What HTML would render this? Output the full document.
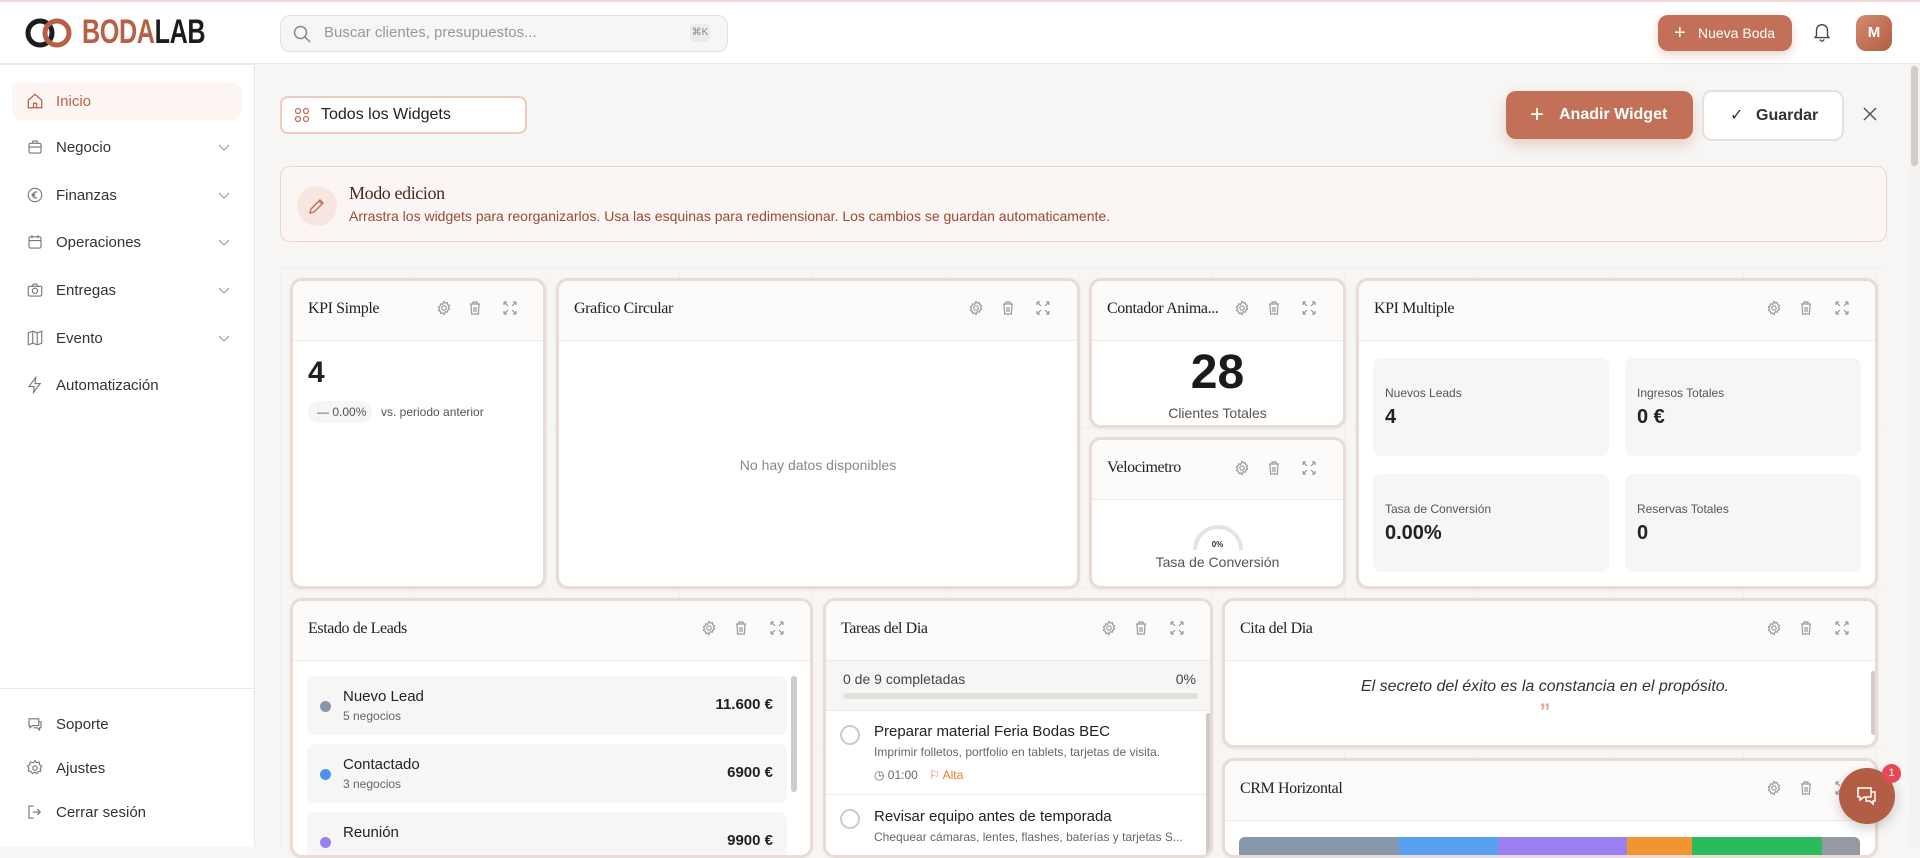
<!DOCTYPE html>
<html><head><meta charset="utf-8"><style>
*{box-sizing:border-box;margin:0;padding:0}
body{width:1920px;height:847px;overflow:hidden;font-family:"Liberation Sans",sans-serif;background:#f7f6f4;position:relative;color:#222}
.abs{position:absolute}
.serif{font-family:"Liberation Serif",serif;letter-spacing:-0.4px}
#top{left:0;top:0;width:1920px;height:2px;background:#f3d9dc}
#hdr{left:0;top:2px;width:1920px;height:62px;background:#fff;border-bottom:1px solid #ebe8e5}
#side{left:0;top:64px;width:255px;height:783px;background:#fff;border-right:1px solid #ebe8e5}
#logoline{left:0;top:64px;width:255px;height:1px;background:#ebe8e5}
.nav{position:absolute;left:12px;width:230px;height:38px;border-radius:10px;font-size:15px;color:#333;display:flex;align-items:center}
.nav svg{position:absolute;left:14px}
.nav span{position:absolute;left:44px}
.nav .chev{position:absolute;left:205px}
.w{position:absolute;background:#fff;border:3px solid #e9dcd6;border-radius:12px;overflow:hidden;box-shadow:0 1px 3px rgba(0,0,0,.06)}
.wh{height:60px;background:#fcfbfa;border-bottom:1px solid #eeebe8;position:relative}
.wh .t{position:absolute;left:15px;top:19px;font-size:16px;color:#222}
.kbox{position:absolute;background:#f7f6f4;border-radius:8px}
.kbox .l{position:absolute;left:12px;top:28px;font-size:12px;color:#555}
.kbox .v{position:absolute;left:12px;top:48px;font-size:20px;font-weight:bold;color:#222}
.lead{position:absolute;left:14px;width:480px;height:59px;background:#f7f6f4;border-radius:8px}
.lead .d{position:absolute;left:13px;top:25px;width:11px;height:11px;border-radius:50%}
.lead .n{position:absolute;left:36px;top:12px;font-size:15px;color:#222}
.lead .s{position:absolute;left:36px;top:33px;font-size:12px;color:#666}
.lead .a{position:absolute;right:14px;top:20px;font-size:15px;font-weight:bold;color:#222}
</style></head><body>
<div id="top" class="abs"></div>
<div id="hdr" class="abs"></div>
<div id="side" class="abs"></div>
<div id="logoline" class="abs"></div>

<!-- logo -->
<svg class="abs" style="left:24px;top:17px" width="58" height="32" viewBox="0 0 58 32">
<circle cx="16" cy="16" r="12" fill="none" stroke="#1c1c1c" stroke-width="5"/>
<circle cx="33" cy="16" r="12" fill="none" stroke="#b95f45" stroke-width="5"/>
</svg>
<div class="abs" style="left:82px;top:13px;font-size:34px;font-weight:bold;letter-spacing:-0.5px;transform:scaleX(.74);transform-origin:left;font-family:'Liberation Sans Narrow','Liberation Sans',sans-serif"><span style="color:#b95f45">BODA</span><span style="color:#1c1c1c">LAB</span></div>

<!-- search -->
<div class="abs" style="left:280px;top:15px;width:448px;height:37px;border:1px solid #e3e1de;border-radius:10px;background:#f7f6f4"></div>
<svg class="abs" style="left:292px;top:24px" width="20" height="20" viewBox="0 0 20 20"><circle cx="8.5" cy="8.5" r="6" fill="none" stroke="#888" stroke-width="1.5"/><path d="M13 13l5 5" stroke="#888" stroke-width="1.5"/></svg>
<div class="abs" style="left:324px;top:24px;font-size:15px;color:#999">Buscar clientes, presupuestos...</div>
<div class="abs" style="left:690px;top:24px;width:20px;height:18px;background:#eeecea;border-radius:4px;font-size:10px;color:#888;text-align:center;line-height:18px">⌘K</div>

<!-- header right -->
<div class="abs" style="left:1658px;top:15px;width:134px;height:36px;background:#c27058;border-radius:10px;box-shadow:0 4px 10px rgba(194,112,88,.3);color:#fff;font-size:14px;line-height:36px"><span style="position:absolute;left:16px;font-size:20px;font-weight:300">+</span><span style="position:absolute;left:40px">Nueva Boda</span></div>
<svg class="abs" style="left:1811px;top:21px" width="22" height="22" viewBox="0 0 24 24" fill="none" stroke="#444" stroke-width="1.5"><path d="M6 16V10a6 6 0 0112 0v6l1.5 2h-15z"/><path d="M10 20a2 2 0 004 0"/></svg>
<div class="abs" style="left:1856px;top:15px;width:36px;height:36px;border-radius:10px;background:linear-gradient(135deg,#d38a70,#b35d44);color:#fff;font-size:15px;font-weight:bold;text-align:center;line-height:36px">M</div>

<!-- sidebar nav -->
<div class="nav" style="top:82px;background:#fcf5f2;color:#b95f45"><svg width="18" height="18" viewBox="0 0 24 24" fill="none" stroke="#b95f45" stroke-width="1.6"><path d="M3 11l9-8 9 8v10H3z"/><path d="M10 21v-6h4v6"/></svg><span>Inicio</span></div>
<div class="nav" style="top:128px"><svg width="18" height="18" viewBox="0 0 24 24" fill="none" stroke="#777" stroke-width="1.5"><rect x="4" y="7" width="16" height="13" rx="2"/><path d="M9 7V4h6v3M4 12h16"/></svg><span>Negocio</span><svg class="chev" width="14" height="14" viewBox="0 0 14 14" fill="none" stroke="#aaa" stroke-width="1.3"><path d="M2 5l5 5 5-5"/></svg></div>
<div class="nav" style="top:176px"><svg width="18" height="18" viewBox="0 0 24 24" fill="none" stroke="#777" stroke-width="1.5"><circle cx="12" cy="12" r="9"/><path d="M15 8.5a4 4 0 100 7M7.5 11h5M7.5 13h5"/></svg><span>Finanzas</span><svg class="chev" width="14" height="14" viewBox="0 0 14 14" fill="none" stroke="#aaa" stroke-width="1.3"><path d="M2 5l5 5 5-5"/></svg></div>
<div class="nav" style="top:223px"><svg width="18" height="18" viewBox="0 0 24 24" fill="none" stroke="#777" stroke-width="1.5"><rect x="4" y="5" width="16" height="15" rx="2"/><path d="M4 10h16M8 3v4M16 3v4"/></svg><span>Operaciones</span><svg class="chev" width="14" height="14" viewBox="0 0 14 14" fill="none" stroke="#aaa" stroke-width="1.3"><path d="M2 5l5 5 5-5"/></svg></div>
<div class="nav" style="top:271px"><svg width="18" height="18" viewBox="0 0 24 24" fill="none" stroke="#777" stroke-width="1.5"><rect x="3" y="7" width="18" height="13" rx="2"/><path d="M8 7l2-3h4l2 3"/><circle cx="12" cy="13" r="3.5"/></svg><span>Entregas</span><svg class="chev" width="14" height="14" viewBox="0 0 14 14" fill="none" stroke="#aaa" stroke-width="1.3"><path d="M2 5l5 5 5-5"/></svg></div>
<div class="nav" style="top:319px"><svg width="18" height="18" viewBox="0 0 24 24" fill="none" stroke="#777" stroke-width="1.5"><path d="M3 5l6-2 6 2 6-2v16l-6 2-6-2-6 2z"/><path d="M9 3v16M15 5v16"/></svg><span>Evento</span><svg class="chev" width="14" height="14" viewBox="0 0 14 14" fill="none" stroke="#aaa" stroke-width="1.3"><path d="M2 5l5 5 5-5"/></svg></div>
<div class="nav" style="top:366px"><svg width="18" height="18" viewBox="0 0 24 24" fill="none" stroke="#777" stroke-width="1.5"><path d="M13 2L4 14h7l-1 8 9-12h-7z"/></svg><span>Automatización</span></div>
<div class="abs" style="left:0;top:688px;width:255px;height:1px;background:#ebe8e5"></div>
<div class="nav" style="top:705px"><svg width="18" height="18" viewBox="0 0 24 24" fill="none" stroke="#777" stroke-width="1.5"><path d="M4 5h13v9H9l-4 3v-3H4z"/><path d="M17 9h3v8h-2v3l-3-3h-5"/></svg><span>Soporte</span></div>
<div class="nav" style="top:749px"><svg width="18" height="18" viewBox="0 0 24 24" fill="none" stroke="#777" stroke-width="1.5"><circle cx="12" cy="12" r="3"/><path d="M12 2l2 3 3.5-1 .5 3.5 3 2-2 3 1 3.5-3.5.5-2 3-3-2-3 2-2-3-3.5-.5 1-3.5-2-3 3-2 .5-3.5L10 5z"/></svg><span>Ajustes</span></div>
<div class="nav" style="top:793px"><svg width="18" height="18" viewBox="0 0 24 24" fill="none" stroke="#777" stroke-width="1.5"><path d="M10 4H4v16h6M15 8l4 4-4 4M19 12H9"/></svg><span>Cerrar sesión</span></div>

<!-- toolbar -->
<div class="abs" style="left:280px;top:96px;width:247px;height:38px;background:#fff;border:2px solid #efc9bb;border-radius:8px"></div>
<svg class="abs" style="left:294px;top:107px" width="16" height="16" viewBox="0 0 16 16" fill="none" stroke="#c27058" stroke-width="1.3"><circle cx="4" cy="4" r="2.5"/><circle cx="12" cy="4" r="2.5"/><circle cx="4" cy="12" r="2.5"/><circle cx="12" cy="12" r="2.5"/></svg>
<div class="abs" style="left:321px;top:106px;font-size:16px;color:#222">Todos los Widgets</div>
<div class="abs" style="left:1506px;top:91px;width:187px;height:48px;background:#c27058;border-radius:10px;box-shadow:0 6px 14px rgba(194,112,88,.3);color:#fff;font-size:16px;font-weight:bold;line-height:48px"><span style="position:absolute;left:24px;font-size:24px;font-weight:300">+</span><span style="position:absolute;left:53px">Anadir Widget</span></div>
<div class="abs" style="left:1702px;top:90px;width:142px;height:51px;background:#fff;border:2px solid #e3e1de;border-radius:10px;font-size:16px;font-weight:bold;color:#333;line-height:47px"><span style="position:absolute;left:26px;font-weight:normal">✓</span><span style="position:absolute;left:52px">Guardar</span></div>
<svg class="abs" style="left:1862px;top:106px" width="16" height="16" viewBox="0 0 16 16" stroke="#555" stroke-width="1.5"><path d="M2 2l12 12M14 2L2 14"/></svg>

<!-- banner -->
<div class="abs" style="left:280px;top:166px;width:1607px;height:76px;background:#fbf6f3;border:1px solid #f0d3c8;border-radius:10px"></div>
<div class="abs" style="left:297px;top:186px;width:40px;height:40px;border-radius:50%;background:#f7e6df"></div>
<svg class="abs" style="left:307px;top:196px" width="20" height="20" viewBox="0 0 20 20" fill="none" stroke="#c27058" stroke-width="1.4"><path d="M3 17l1-4 9-9 3 3-9 9z"/><path d="M12 5l3 3"/></svg>
<div class="abs serif" style="left:349px;top:183px;font-size:18px;color:#4a2a22">Modo edicion</div>
<div class="abs" style="left:349px;top:208px;font-size:14px;color:#9a4a35">Arrastra los widgets para reorganizarlos. Usa las esquinas para redimensionar. Los cambios se guardan automaticamente.</div>

<!-- grid lines faint -->
<div class="abs" style="left:280px;top:267px;width:1607px;height:580px;background-image:linear-gradient(#efedeb 1px,transparent 1px),linear-gradient(90deg,#efedeb 1px,transparent 1px);background-size:133px 160px;opacity:.6"></div>

<!-- scrollbar -->
<div class="abs" style="left:1909px;top:64px;width:11px;height:783px;background:#f3f2f0"></div>
<div class="abs" style="left:1911px;top:66px;width:7px;height:100px;background:#cfccc9;border-radius:4px"></div>

<!-- Row 1 -->
<div class="w" style="left:290px;top:278px;width:256px;height:311px">
 <div class="wh"><div class="t serif">KPI Simple</div></div>
 <div class="abs" style="left:15px;top:75px;font-size:30px;font-weight:bold">4</div>
 <div class="abs" style="left:15px;top:120px;width:64px;height:22px;background:#f7f6f4;border-radius:11px;font-size:12px;color:#555;line-height:22px;padding-left:9px">— 0.00%</div>
 <div class="abs" style="left:88px;top:124px;font-size:12px;color:#555">vs. periodo anterior</div>
</div>
<div class="w" style="left:556px;top:278px;width:524px;height:311px">
 <div class="wh"><div class="t serif">Grafico Circular</div></div>
 <div class="abs" style="left:0;width:518px;top:176px;text-align:center;font-size:14px;color:#888">No hay datos disponibles</div>
</div>
<div class="w" style="left:1089px;top:278px;width:257px;height:150px">
 <div class="wh"><div class="t serif">Contador Anima...</div></div>
 <div class="abs" style="left:0;width:251px;top:64px;text-align:center;font-size:48px;font-weight:bold;color:#1a1a1a">28</div>
 <div class="abs" style="left:0;width:251px;top:124px;text-align:center;font-size:14px;color:#555">Clientes Totales</div>
</div>
<div class="w" style="left:1089px;top:437px;width:257px;height:152px">
 <div class="wh"><div class="t serif">Velocimetro</div></div>
 <svg class="abs" style="left:98px;top:80px" width="56" height="32" viewBox="0 0 56 32"><path d="M5 30a23 23 0 0146 0" fill="none" stroke="#e4e3e8" stroke-width="4"/></svg>
 <div class="abs" style="left:0;width:251px;top:100px;text-align:center;font-size:8px;font-weight:bold;color:#333">0%</div>
 <div class="abs" style="left:0;width:251px;top:114px;text-align:center;font-size:14px;color:#555">Tasa de Conversión</div>
</div>
<div class="w" style="left:1356px;top:278px;width:522px;height:311px">
 <div class="wh"><div class="t serif">KPI Multiple</div></div>
 <div class="kbox" style="left:14px;top:77px;width:236px;height:98px"><div class="l">Nuevos Leads</div><div class="v">4</div></div>
 <div class="kbox" style="left:266px;top:77px;width:236px;height:98px"><div class="l">Ingresos Totales</div><div class="v">0 €</div></div>
 <div class="kbox" style="left:14px;top:193px;width:236px;height:98px"><div class="l">Tasa de Conversión</div><div class="v">0.00%</div></div>
 <div class="kbox" style="left:266px;top:193px;width:236px;height:98px"><div class="l">Reservas Totales</div><div class="v">0</div></div>
</div>

<!-- Row 2 -->
<div class="w" style="left:290px;top:598px;width:523px;height:260px">
 <div class="wh"><div class="t serif">Estado de Leads</div></div>
 <div class="lead" style="top:75px"><div class="d" style="background:#8a97ab"></div><div class="n">Nuevo Lead</div><div class="s">5 negocios</div><div class="a">11.600 €</div></div>
 <div class="lead" style="top:143px"><div class="d" style="background:#4f93ef"></div><div class="n">Contactado</div><div class="s">3 negocios</div><div class="a">6900 €</div></div>
 <div class="lead" style="top:211px"><div class="d" style="background:#9b7ff0"></div><div class="n">Reunión</div><div class="s"></div><div class="a">9900 €</div></div>
 <div class="abs" style="left:498px;top:75px;width:6px;height:116px;background:#cfccc9;border-radius:3px"></div>
</div>
<div class="w" style="left:823px;top:598px;width:390px;height:260px">
 <div class="wh"><div class="t serif">Tareas del Dia</div></div>
 <div class="abs" style="left:0;top:60px;width:384px;height:50px;background:#f7f6f4;border-bottom:1px solid #eeebe8"></div>
 <div class="abs" style="left:17px;top:70px;font-size:14px;color:#444">0 de 9 completadas</div>
 <div class="abs" style="right:14px;top:70px;font-size:14px;color:#444">0%</div>
 <div class="abs" style="left:17px;top:92px;width:355px;height:6px;background:#e2e0dd;border-radius:3px"></div>
 <div class="abs" style="left:14px;top:124px;width:20px;height:20px;border:2px solid #ccc;border-radius:50%"></div>
 <div class="abs" style="left:48px;top:122px;font-size:15px;color:#222">Preparar material Feria Bodas BEC</div>
 <div class="abs" style="left:48px;top:144px;font-size:12px;color:#666">Imprimir folletos, portfolio en tablets, tarjetas de visita.</div>
 <div class="abs" style="left:48px;top:167px;font-size:12px;color:#666">◷ 01:00 <span style="color:#f07a2a;margin-left:8px">⚐ Alta</span></div>
 <div class="abs" style="left:0;top:193px;width:384px;height:1px;background:#eeebe8"></div>
 <div class="abs" style="left:14px;top:208px;width:20px;height:20px;border:2px solid #ccc;border-radius:50%"></div>
 <div class="abs" style="left:48px;top:207px;font-size:15px;color:#222">Revisar equipo antes de temporada</div>
 <div class="abs" style="left:48px;top:229px;font-size:12px;color:#666">Chequear cámaras, lentes, flashes, baterías y tarjetas S...</div>
 <div class="abs" style="left:380px;top:112px;width:5px;height:150px;background:#cfccc9;border-radius:3px"></div>
</div>
<div class="w" style="left:1222px;top:598px;width:656px;height:150px">
 <div class="wh"><div class="t serif">Cita del Dia</div></div>
 <div class="abs" style="left:0;width:640px;top:77px;text-align:center;font-size:16px;font-style:italic;color:#333">El secreto del éxito es la constancia en el propósito.</div>
 <div class="abs" style="left:0;width:640px;top:98px;text-align:center;font-size:22px;font-weight:bold;color:#e2ab95">”</div>
 <div class="abs" style="left:646px;top:70px;width:5px;height:64px;background:#cfccc9;border-radius:3px"></div>
</div>
<div class="w" style="left:1222px;top:758px;width:656px;height:100px">
 <div class="wh"><div class="t serif">CRM Horizontal</div></div>
 <div class="abs" style="left:14px;top:76px;width:621px;height:30px;border-radius:6px;overflow:hidden;display:flex">
  <div style="width:160px;background:#8797ad"></div><div style="width:99px;background:#5aa0f0"></div><div style="width:129px;background:#9b80f0"></div><div style="width:65px;background:#f0952f"></div><div style="width:130px;background:#2bbb5d"></div><div style="flex:1;background:#959aa2"></div>
 </div>
</div>

<!-- widget header icons -->
<svg width="0" height="0" style="position:absolute"><defs>
<g id="gear" fill="none" stroke="#999" stroke-width="1.2"><circle cx="8" cy="8" r="2.2"/><path d="M8 1.5l1.3 1.6 2-.5.4 2 1.8 1-1 1.8 1 1.8-1.8 1-.4 2-2-.5L8 14.5l-1.3-1.6-2 .5-.4-2-1.8-1 1-1.8-1-1.8 1.8-1 .4-2 2 .5z"/></g>
<g id="trash" fill="none" stroke="#999" stroke-width="1.2"><path d="M3 4h10M6 4V2h4v2M4 4l.6 10h6.8L12 4M7 7v5M9 7v5"/></g>
<g id="exp" fill="none" stroke="#999" stroke-width="1.2"><path d="M2 2l4 4M2 2v3M2 2h3M14 2l-4 4M14 2v3M14 2h-3M2 14l4-4M2 14v-3M2 14h3M14 14l-4-4M14 14v-3M14 14h-3"/></g>
</defs></svg>
<svg class="abs" style="left:436px;top:300px" width="16" height="16"><use href="#gear"/></svg><svg class="abs" style="left:467px;top:300px" width="16" height="16"><use href="#trash"/></svg><svg class="abs" style="left:502px;top:300px" width="16" height="16"><use href="#exp"/></svg>
<svg class="abs" style="left:968px;top:300px" width="16" height="16"><use href="#gear"/></svg><svg class="abs" style="left:1000px;top:300px" width="16" height="16"><use href="#trash"/></svg><svg class="abs" style="left:1035px;top:300px" width="16" height="16"><use href="#exp"/></svg>
<svg class="abs" style="left:1234px;top:300px" width="16" height="16"><use href="#gear"/></svg><svg class="abs" style="left:1266px;top:300px" width="16" height="16"><use href="#trash"/></svg><svg class="abs" style="left:1301px;top:300px" width="16" height="16"><use href="#exp"/></svg>
<svg class="abs" style="left:1234px;top:460px" width="16" height="16"><use href="#gear"/></svg><svg class="abs" style="left:1266px;top:460px" width="16" height="16"><use href="#trash"/></svg><svg class="abs" style="left:1301px;top:460px" width="16" height="16"><use href="#exp"/></svg>
<svg class="abs" style="left:1766px;top:300px" width="16" height="16"><use href="#gear"/></svg><svg class="abs" style="left:1798px;top:300px" width="16" height="16"><use href="#trash"/></svg><svg class="abs" style="left:1834px;top:300px" width="16" height="16"><use href="#exp"/></svg>
<svg class="abs" style="left:701px;top:620px" width="16" height="16"><use href="#gear"/></svg><svg class="abs" style="left:733px;top:620px" width="16" height="16"><use href="#trash"/></svg><svg class="abs" style="left:769px;top:620px" width="16" height="16"><use href="#exp"/></svg>
<svg class="abs" style="left:1101px;top:620px" width="16" height="16"><use href="#gear"/></svg><svg class="abs" style="left:1133px;top:620px" width="16" height="16"><use href="#trash"/></svg><svg class="abs" style="left:1169px;top:620px" width="16" height="16"><use href="#exp"/></svg>
<svg class="abs" style="left:1766px;top:620px" width="16" height="16"><use href="#gear"/></svg><svg class="abs" style="left:1798px;top:620px" width="16" height="16"><use href="#trash"/></svg><svg class="abs" style="left:1834px;top:620px" width="16" height="16"><use href="#exp"/></svg>
<svg class="abs" style="left:1766px;top:780px" width="16" height="16"><use href="#gear"/></svg><svg class="abs" style="left:1798px;top:780px" width="16" height="16"><use href="#trash"/></svg><svg class="abs" style="left:1834px;top:780px" width="16" height="16"><use href="#exp"/></svg>

<!-- chat bubble -->
<div class="abs" style="left:1839px;top:768px;width:56px;height:56px;border-radius:50%;background:#b35d44;box-shadow:0 4px 12px rgba(0,0,0,.2)"></div>
<svg class="abs" style="left:1855px;top:784px" width="24" height="24" viewBox="0 0 24 24" fill="none" stroke="#fff" stroke-width="1.5"><path d="M3 4h13v9H9l-4 3v-3H3z"/><path d="M16 8h4v9h-2v3l-3-3h-4v-4"/></svg>
<div class="abs" style="left:1882px;top:764px;width:19px;height:19px;border-radius:50%;background:#e84855;color:#fff;font-size:11px;text-align:center;line-height:19px">1</div>
</body></html>
